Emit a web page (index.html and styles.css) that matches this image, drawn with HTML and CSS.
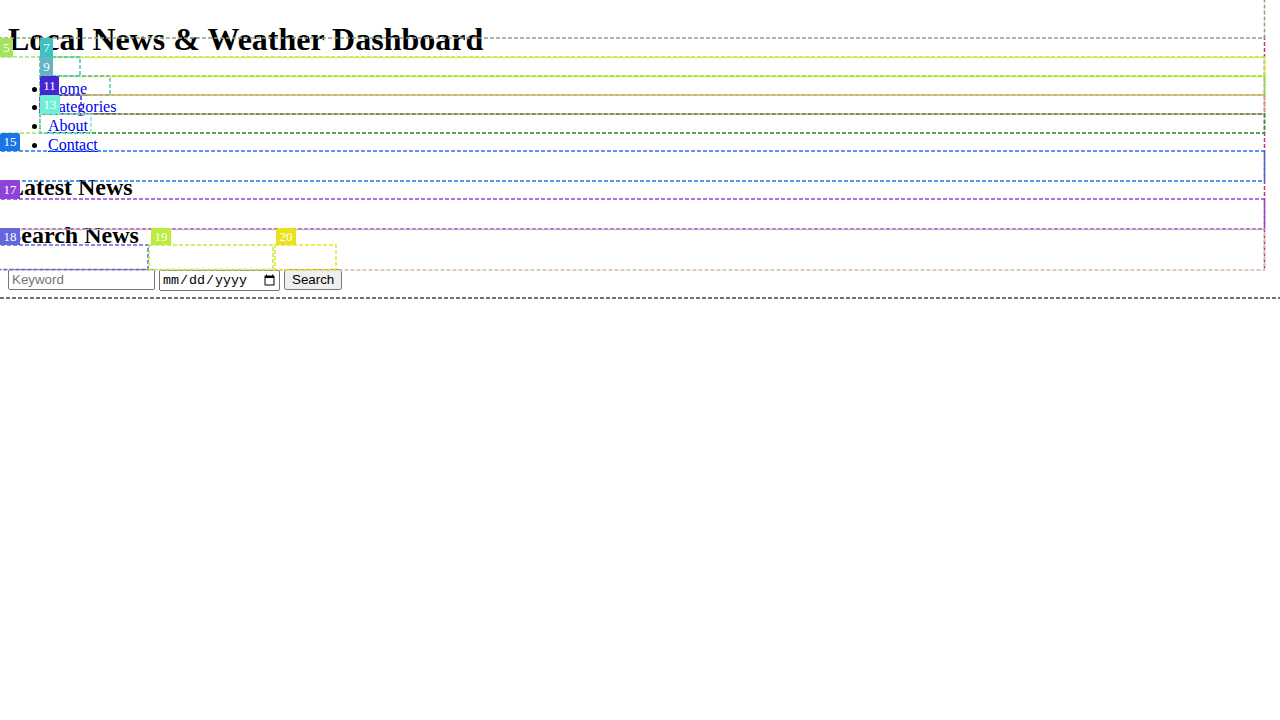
FILE: index.html
```html
<!DOCTYPE html>
<html lang="en">
<head>
<meta charset="utf-8">
<title>Local News &amp; Weather Dashboard</title>
<link rel="stylesheet" href="styles.css">
</head>
<body>
<header class="site-header">
  <h1>Local News &amp; Weather Dashboard</h1>
</header>
<nav class="main-nav">
  <ul>
    <li><a href="#">Home</a></li>
    <li><a href="#">Categories</a></li>
    <li><a href="#">About</a></li>
    <li><a href="#">Contact</a></li>
  </ul>
</nav>
<main>
  <section class="news">
    <h2>Latest News</h2>
    <div class="news-list"></div>
  </section>
  <section class="search">
    <h2>Search News</h2>
    <form class="search-form">
      <input class="kw" type="text" placeholder="Keyword">
      <input class="dt" type="date">
      <button class="btn" type="button">Search</button>
    </form>
  </section>
</main>

<div class="overlay">
  <svg class="boxes" width="1280" height="720" viewBox="0 0 1280 720">
    <g fill="none" stroke-width="1.5" stroke-dasharray="4 2">
      <rect x="-5" y="-5" width="1290" height="303" stroke="#4a4638"/>
      <path d="M1264.5 36 V268" stroke="#b83382"/>
      <rect x="-5" y="-10" width="1269.5" height="48" stroke="#88a77f"/>
      <rect x="-5" y="57" width="1269.5" height="76" stroke="#9ce36c"/>
      <rect x="40" y="57.5" width="1224.5" height="19" stroke="#e6ec34"/>
      <rect x="40" y="57" width="40" height="19" stroke="#3cc2c0"/>
      <rect x="40" y="76" width="1224.5" height="19" stroke="#74e63a"/>
      <rect x="40" y="76" width="70" height="19" stroke="#6ab8c8"/>
      <rect x="40" y="95" width="1224.5" height="19" stroke="#f38c78"/>
      <rect x="40" y="95" width="41" height="19" stroke="#4a2ad0"/>
      <rect x="40" y="114" width="1224.5" height="19" stroke="#3f8b3e"/>
      <rect x="40" y="114" width="51" height="19" stroke="#6ff0d4"/>
      <rect x="-5" y="151" width="1269.5" height="30" stroke="#1b74e6"/>
      <rect x="-5" y="199" width="1269.5" height="30" stroke="#8f41dc"/>
      <rect x="-5" y="229.5" width="1269.5" height="40.5" stroke="#d6bca8"/>
      <rect x="-5" y="245" width="153" height="24.5" stroke="#6466dc"/>
      <rect x="149" y="245" width="124" height="24.5" stroke="#bbee3c"/>
      <rect x="275" y="245" width="61" height="24.5" stroke="#ebe21c"/>
    </g>
  </svg>
  <div class="tag t5">5</div>
  <div class="tag t7">7</div>
  <div class="tag t9">9</div>
  <div class="tag t11">11</div>
  <div class="tag t13">13</div>
  <div class="tag t15">15</div>
  <div class="tag t17">17</div>
  <div class="tag t18">18</div>
  <div class="tag t19">19</div>
  <div class="tag t20">20</div>
</div>
</body>
</html>
```

FILE: styles.css
```css
body {
  margin: 0 8px 8px;
  font-family: "Liberation Serif", "Times New Roman", serif;
  line-height: 1.15;
}

.site-header h1 {
  margin: 21.44px 0;
}

.main-nav li {
  line-height: 1.167;
}

.search-form {
  margin: 0;
}

.search-form .kw,
.search-form .btn {
  font-family: "Liberation Sans", Arial, sans-serif;
  font-size: 13.333px;
}

.search-form .kw {
  box-sizing: border-box;
  width: 147px;
}

.search-form .dt {
  box-sizing: border-box;
  width: 121px;
  font-family: "Liberation Mono", "Courier New", monospace;
  font-size: 13.333px;
}

.overlay {
  position: absolute;
  top: 0;
  left: 0;
  width: 1280px;
  height: 720px;
  pointer-events: none;
  overflow: hidden;
}

.boxes {
  position: absolute;
  top: 0;
  left: 0;
}

.tag {
  position: absolute;
  height: 19px;
  color: #fff;
  font-family: "Liberation Serif", serif;
  font-size: 13px;
  line-height: 19px;
  text-align: center;
  border-radius: 2px 2px 0 0;
}

.t5  { left: 0;    top: 38px;  width: 13px; background: #a5e35e; }
.t7  { left: 40px; top: 38px;  width: 13px; background: #3cc2c0; }
.t9  { left: 40px; top: 57px;  width: 13px; background: #64b4c4; }
.t11 { left: 40px; top: 76px;  width: 19px; background: #4626d0; }
.t13 { left: 40px; top: 95px;  width: 20px; background: #6ff0d4; }
.t15 { left: 0;    top: 133px; width: 20px; height: 18px; line-height: 18px; background: #1b74e6; }
.t17 { left: 0;    top: 180px; width: 20px; background: #8f41dc; }
.t18 { left: 0;    top: 228px; width: 20px; height: 17px; line-height: 17px; background: #6466dc; }
.t19 { left: 151px; top: 228px; width: 20px; height: 17px; line-height: 17px; background: #bbee3c; }
.t20 { left: 276px; top: 228px; width: 20px; height: 17px; line-height: 17px; background: #ebe21c; }
```
